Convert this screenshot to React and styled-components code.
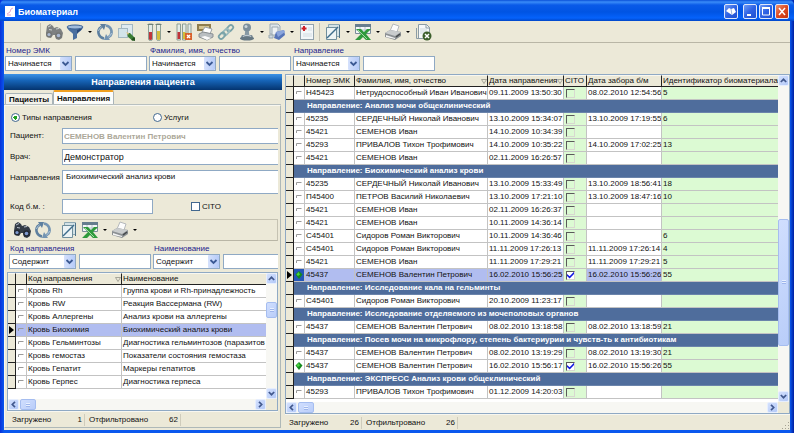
import React, { useState } from 'react';
import styled, { createGlobalStyle, css } from 'styled-components';

const face = '#ece9d8';
const edge = '#8fa9c4';
const line = '#c3c3c3';

const GlobalStyle = createGlobalStyle`
  body {
    margin: 0;
    background: #0a3fd0;
  }

  *, *::before, *::after {
    box-sizing: border-box;
  }

  body, button, input, select, textarea, table {
    font-family: 'Liberation Sans', Arial, sans-serif;
    font-size: 8px;
    line-height: 12px;
    color: #111;
  }

  button, input, select, textarea {
    margin: 0;
    padding: 0;
    border-radius: 0;
  }
`;

const Window = styled.div`
  display: flex;
  flex-direction: column;
  min-height: 100vh;
  padding: 0 4px 3px;
  background: linear-gradient(to right, #0831d9, #0a58ee 4px, #0a58ee calc(100% - 4px), #001ea0);
`;

const TitleBar = styled.header`
  display: flex;
  align-items: center;
  height: 21px;
  margin: 0 -4px;
  padding: 2px 5px 0;
  border-radius: 5px 5px 0 0;
  background: linear-gradient(#0a50d8, #3a8cf8 2px, #0a5ae8 5px, #0054e3 12px, #0562fb 18px, #0046c8);
`;

const AppTitle = styled.h1`
  flex: 1;
  margin: 0 0 0 3px;
  font: bold 9px/12px 'Liberation Sans', Arial, sans-serif;
  color: #fff;
`;

const CaptionButton = styled.button`
  width: 14px;
  height: 15px;
  margin-left: ${props => (props.$apart ? '5px' : '2px')};
  border: 1px solid #dfe8fb;
  border-radius: 2px;
  background: ${props => (props.$close
    ? 'linear-gradient(135deg, #f0936f, #dc4a22 50%, #c4350f)'
    : 'linear-gradient(135deg, #6f9cf5, #2e62e4 50%, #2150cf)')};

  svg {
    display: block;
    width: 100%;
    height: 100%;
  }
`;

const Client = styled.main`
  flex: 1;
  display: flex;
  flex-direction: column;
  background: ${face};
`;

const Toolbar = styled.div`
  display: flex;
  align-items: center;
  height: 22px;
  padding-left: ${props => (props.$inner ? '4px' : '34px')};
  border-bottom: 1px solid #b9b6a6;
  ${props => props.$inner && css`
    border-top: 1px solid #c5c2b2;
    border-right: 1px solid #c5c2b2;
  `}
`;

const ToolButton = styled.button`
  display: flex;
  align-items: center;
  justify-content: center;
  width: 21px;
  height: 20px;
  border: 0;
  background: none;

  svg {
    width: 18px;
    height: 18px;
  }

  &:disabled svg {
    opacity: 0.6;
  }
`;

const DropButton = styled.button`
  display: flex;
  align-items: center;
  justify-content: center;
  width: 9px;
  height: 20px;
  border: 0;
  background: none;

  &::after {
    content: '';
    border: 2px solid transparent;
    border-top-color: #000;
    border-bottom: 0;
  }
`;

const Separator = styled.span`
  width: 1px;
  height: 18px;
  margin: 0 ${props => (props.$wide ? '3px' : '2px')};
  background: ${props => (props.$blank ? 'transparent' : '#c5c2b2')};
`;

const Filters = styled.div`
  display: flex;
  padding: ${props => (props.$inner ? '2px 0 3px 2px' : '2px 0 3px 1px')};
`;

const FilterBox = styled.div`
  display: flex;
  flex-direction: column;
  flex: 0 0 144px;
  min-width: 0;

  &:last-child {
    flex: ${props => (props.$inner ? '1 1 0' : '0 0 144px')};
  }
`;

const FilterLabel = styled.label`
  padding-left: 1px;
  color: #1c1c8c;
  line-height: 11px;
`;

const FilterFields = styled.div`
  display: flex;
  gap: 3px;
  padding-right: ${props => (props.$open ? '0' : '2px')};
`;

const SelectBox = styled.span`
  position: relative;
  flex: 0 0 67px;

  svg {
    position: absolute;
    top: 1px;
    right: 1px;
    width: 11px;
    height: 13px;
    background: linear-gradient(to right, #d5e1fc, #b6cbf8);
    border-radius: 1px;
    pointer-events: none;
  }
`;

const Select = styled.select`
  display: block;
  appearance: none;
  width: 100%;
  height: 15px;
  padding-left: 2px;
  border: 1px solid ${edge};
  background: #fff;
`;

const TextInput = styled.input`
  flex: ${props => (props.$short ? '0 0 91px' : '1')};
  min-width: 0;
  height: ${props => (props.$tall ? '16px' : '15px')};
  padding: 0 1px;
  border: 1px solid ${edge};
  ${props => props.$open && 'border-right: 0;'}
  background: #fff;
  font-size: ${props => (props.$big ? '9px' : '8px')};

  &:disabled {
    font-weight: bold;
    color: #aca899;
  }
`;

const Panels = styled.div`
  flex: 1;
  display: grid;
  grid-template-columns: 278px minmax(0, 1fr);
  gap: 3px;
`;

const Side = styled.section`
  display: flex;
  flex-direction: column;
  min-width: 0;
`;

const PanelTitle = styled.h2`
  margin: 0;
  height: 16px;
  background: linear-gradient(#3c93e6, #1765b8 40%, #04346f);
  color: #fff;
  text-align: center;
  font: bold 9px/16px 'Liberation Sans', Arial, sans-serif;
`;

const Tabs = styled.div`
  display: flex;
  align-items: flex-end;
  height: 15px;
  padding-left: 1px;
`;

const Tab = styled.button`
  height: ${props => (props.$active ? '15px' : '12px')};
  padding: 0 3px;
  border: 1px solid #a9b4b8;
  border-top: ${props => (props.$active ? '2px solid #f0a020' : '1px solid #a9b4b8')};
  border-bottom: 0;
  border-radius: 2px 2px 0 0;
  background: ${props => (props.$active ? '#fdfdfb' : '#f3f2ea')};
  font-weight: bold;
  line-height: 11px;
`;

const Pane = styled.div`
  flex: 1;
  display: flex;
  flex-direction: column;
  margin: 0 1px 2px 0;
  padding: 2px 2px 0;
  border: 1px solid #f8f7f0;
  border-right-color: #aeb8b8;
  border-bottom-color: #aeb8b8;
  box-shadow: 0 -1px #b8c0c0;
`;

const Choices = styled.div`
  display: grid;
  grid-template-columns: 142px 1fr;
  align-items: center;
  height: 19px;
  padding-left: 4px;
`;

const CheckLabel = styled.label`
  display: flex;
  align-items: center;
  gap: 2px;
`;

const Radio = styled.input`
  appearance: none;
  width: 9px;
  height: 9px;
  border: 1px solid #42688f;
  border-radius: 50%;
  background: #fff;

  &:checked {
    background: radial-gradient(#21a121 0 2px, #fff 2px);
  }
`;

const Check = styled.input`
  display: block;
  appearance: none;
  width: 9px;
  height: 9px;
  border: 1px solid #42688f;
  background: #fff;
  ${props => props.$sunken && css`
    margin-left: 1px;
    border-color: #5a5a5a #d8d8d0 #d8d8d0 #5a5a5a;
    background: ${props.checked ? '#fff' : 'transparent'};
  `}

  &:checked::before {
    content: '';
    display: block;
    width: 7px;
    height: 7px;
    background: #1018e0;
    clip-path: polygon(0 35%, 38% 68%, 100% 5%, 100% 36%, 38% 100%, 0 66%);
  }
`;

const Form = styled.div`
  display: flex;
  flex-direction: column;
  gap: 5px;
  padding: 1px 0 5px 3px;
`;

const Field = styled.div`
  display: flex;
  align-items: ${props => (props.$top ? 'flex-start' : 'center')};
`;

const FieldLabel = styled.label`
  flex: 0 0 52px;
  padding-top: ${props => (props.$top ? '2px' : '0')};
`;

const Memo = styled.textarea`
  flex: 1;
  display: block;
  min-width: 0;
  height: 24px;
  padding: 0 3px;
  border: 1px solid ${edge};
  border-right: 0;
  resize: none;
  overflow: hidden;
`;

const CitoLabel = styled(CheckLabel)`
  margin-left: 38px;
`;

const GridFrame = styled.div`
  flex: 1;
  display: grid;
  grid-template-columns: minmax(0, 1fr) 11px;
  grid-template-rows: 1fr 11px;
  border: 1px solid ${edge};
  background: #fff;
`;

const Table = styled.table`
  width: 100%;
  table-layout: fixed;
  border-collapse: separate;
  border-spacing: 0;
  align-self: start;
`;

const HeadCell = styled.th`
  height: 12px;
  padding: 0 0 0 1px;
  overflow: hidden;
  background: ${face};
  border-right: 1px solid #222;
  border-bottom: 1px solid #222;
  border-top: 1px solid #f8f7f0;
  font-weight: normal;
  line-height: 10px;
  text-align: left;
  white-space: nowrap;

  &:last-child {
    border-right: 0;
  }
`;

const HeadText = styled.span`
  display: flex;
  align-items: center;
  justify-content: space-between;

  svg {
    flex: none;
    width: 6px;
    height: 5px;
  }
`;

const Row = styled.tr`
  background: ${props => (props.$current ? '#b1bdf0' : '#fff')};
`;

const Cell = styled.td`
  height: 13px;
  padding: 0 0 0 1px;
  overflow: hidden;
  border-right: 1px solid ${line};
  border-bottom: 1px solid ${line};
  ${props => props.$green && 'background: #dcfad3;'}
  white-space: nowrap;

  &:last-child {
    border-right: 0;
  }
`;

const MarkCell = styled(Cell)`
  padding: 0;
  ${props => props.$current && 'background: #2456b8;'}

  svg {
    display: block;
    width: 8px;
    height: 8px;
    margin: 0 auto;
  }
`;

const Indicator = styled.td`
  height: 13px;
  padding: 0;
  background: ${face};
  border-right: 1px solid #222;
  border-bottom: 1px solid #222;

  svg {
    display: block;
    width: 5px;
    height: 8px;
    margin: 0 auto;
  }
`;

const GroupCell = styled.td`
  height: 13px;
  padding: 0 0 0 13px;
  overflow: hidden;
  background: #4f6d9c;
  border-bottom: 1px solid #6b84ab;
  color: #fff;
  font-weight: bold;
  white-space: nowrap;
`;

const Bar = styled.div`
  display: flex;
  flex-direction: ${props => (props.$vertical ? 'column' : 'row')};
  min-width: 0;
  background: #f7f7f3;
`;

const BarButton = styled.button`
  flex: 0 0 11px;
  display: flex;
  align-items: center;
  justify-content: center;
  min-height: 11px;
  border: 1px solid #e6eefe;
  border-radius: 2px;
  background: linear-gradient(135deg, #d3e0fd, #b3c9f8);

  svg {
    width: 7px;
    height: 7px;
    transform: rotate(${props => props.$turn}deg);
  }
`;

const Track = styled.div`
  flex: 1;
  display: flex;
  flex-direction: inherit;
`;

const Thumb = styled.div`
  display: flex;
  align-items: center;
  justify-content: center;
  border: 1px solid #a5bdf0;
  border-radius: 2px;
  background: linear-gradient(135deg, #d0defe, #b9cdf9);

  &::after {
    content: '';
    width: 4px;
    height: 4px;
    background: repeating-linear-gradient(#e8f0ff 0 1px, #9fb6ec 1px 2px);
  }
`;

const Corner = styled.div`
  background: ${face};
`;

const Status = styled.footer`
  display: flex;
  align-items: center;
  height: 16px;
  padding-left: ${props => (props.$inner ? '1px' : '0')};
  border-top: 1px solid #f8f7f0;
`;

const StatusItem = styled.span`
  display: flex;
  justify-content: space-between;
  width: ${props => (props.$wide ? '96px' : '77px')};
  padding: 0 2px 0 4px;
  border-right: 1px solid #cfccbc;
`;

const Grip = styled.svg`
  width: 9px;
  height: 9px;
  margin-left: auto;
  align-self: flex-end;
`;

const paths = {
  binoculars: (
    <>
      <path d="M2 3 5 1l3 2 1 2 3-1 4 2 2 4-1 5-3 2-3-1-1-4-2 0-2 3-4-1-1-4z" fill="#343c48" />
      <circle cx="4" cy="11.500" r="3" fill="#252b35" />
      <circle cx="13.500" cy="12.500" r="3.300" fill="#252b35" />
      <circle cx="4" cy="11.500" r="1.600" fill="#7f9ad0" />
      <circle cx="13.500" cy="12.500" r="1.800" fill="#7f9ad0" />
      <path d="m3 4 3-1.500M11 6l3-.5M4 6.500l3 .5" stroke="#b9c1cc" />
    </>
  ),
  funnel: (
    <>
      <path d="M1 4c0 3 5 5 6 7v6l4-2v-4c1-2 6-4 6-7z" fill="#4a6f9f" />
      <path d="M11 11c1-2 5-4 5-6l-5 2z" fill="#29497a" />
      <ellipse cx="9" cy="4" rx="8" ry="2" fill="#9fbadb" stroke="#395f92" />
    </>
  ),
  refresh: (
    <>
      <path d="M8 15.500A6.500 6.500 0 0 1 3.500 5.500L6 3.500" fill="none" stroke="#5d7f9f" strokeWidth="2.600" />
      <path d="M4 1h6L8 7z" fill="#5d7f9f" />
      <path d="M10 2.500A6.500 6.500 0 0 1 14.500 12.500L12 14.500" fill="none" stroke="#7394b2" strokeWidth="2.600" />
      <path d="M14 17H8l2-6z" fill="#7394b2" />
      <path d="M2.500 8a6 6 0 0 1 3-4M15.500 10a6 6 0 0 1-3 4" fill="none" stroke="#b6cbdc" />
    </>
  ),
  pages: (
    <>
      <rect x="4.500" y="1.500" width="11" height="12" fill="#dfeaf0" stroke="#a3b8c2" />
      <rect x="1.500" y="5.500" width="9" height="9" fill="#d3e4ea" stroke="#a3b8c2" />
      <path d="m10 10 3 0 5 5-2 3-5-4z" fill="#3b7d35" />
      <path d="m9 9 3 1-1 2z" fill="#e8c88b" />
      <path d="m14 17 3-3 1 1v3z" fill="#23501f" />
    </>
  ),
  tubes: (
    <>
      <path d="M3.500 1h4v15a2 1.500 0 0 1-4 0z" fill="#e3ebe8" stroke="#8c9e95" />
      <path d="M4 9h3v7a1.500 1 0 0 1-3 0z" fill="#c0343a" />
      <path d="M11.500 1h4v15a2 1.500 0 0 1-4 0z" fill="#e6ece4" stroke="#8c9e95" />
      <path d="M12 8h3v8a1.500 1 0 0 1-3 0z" fill="#d3bd3a" />
      <path d="M2.500 1.500h6M10.500 1.500h6" stroke="#6e8178" />
    </>
  ),
  tubesOff: (
    <>
      <path d="M2 1h3.500v16H2zM7.500 1H11v16H7.500zM13 1h3v10h-3z" fill="#e3ebe8" stroke="#8c9e95" />
      <path d="M2.500 9h2.500v7H2.500z" fill="#c0343a" />
      <path d="M8 9h2.500v7H8z" fill="#d3bd3a" />
      <rect x="10" y="10" width="7" height="7" fill="#d8622c" />
      <path d="m12 12 3 3m0-3-3 3" stroke="#fff" strokeWidth="1.400" />
    </>
  ),
  labels: (
    <>
      <path d="M1 1h14v7H1z" fill="#8f7d4c" />
      <path d="M3 3h10v3H3z" fill="#d5c591" />
      <path d="m6 9 3-5 7 2-2 5z" fill="#fff" stroke="#9aa0a4" />
      <path d="m3 11 4-2 10 2v3l-6 3-8-3z" fill="#b9bec1" stroke="#8a9094" />
      <path d="m5 14 6 3 4-2-6-2z" fill="#fbfbfb" />
    </>
  ),
  link: (
    <g fill="none" strokeWidth="1.800">
      <rect x="9.500" y="3" width="7" height="4.500" rx="2.200" transform="rotate(-45 13 5.200)" stroke="#7aa3a8" />
      <rect x="5.500" y="6.800" width="7" height="4.500" rx="2.200" transform="rotate(-45 9 9)" stroke="#98babd" />
      <rect x="1.500" y="10.500" width="7" height="4.500" rx="2.200" transform="rotate(-45 5 12.800)" stroke="#7aa3a8" />
    </g>
  ),
  stamp: (
    <>
      <path d="M4 12h10l2 4H2z" fill="#7c8d97" />
      <ellipse cx="9" cy="15.500" rx="7" ry="2" fill="#667883" />
      <path d="M7.500 6h3l1 7h-5z" fill="#8799a4" />
      <circle cx="9" cy="4.500" r="4" fill="#7c8f9b" />
      <circle cx="8" cy="3.500" r="1.500" fill="#cbd6dd" />
      <path d="M5 13.500c2-1.500 6-1.500 8 0" fill="none" stroke="#c3ced5" />
    </>
  ),
  eraser: (
    <>
      <path d="M2 1h8l2 2v8H2z" fill="#dde5ea" stroke="#9aa9b2" />
      <path d="M4 4h6v8H4z" fill="#eef2f4" stroke="#9aa9b2" />
      <path d="m8 9 8-2 1 5-6 5-5-2z" fill="#5675b8" />
      <path d="m8 9 8-2 1 2-7 5z" fill="#8aa5dc" />
      <path d="M1 12h4v3H1z" fill="#cfd9df" stroke="#9aa9b2" />
    </>
  ),
  medical: (
    <>
      <rect x="2.500" y="1.500" width="13" height="15" fill="#f3f7f9" stroke="#93a3ad" />
      <path d="M6 3v5M3.500 5.500h5" stroke="#cf2027" strokeWidth="2" />
      <path d="M10 5h4M10 7h4M5 11h9M5 13h9" stroke="#d3dde3" />
    </>
  ),
  chart: (
    <>
      <path d="M4.500 1.500h11v12h-11z" fill="#d3e2e6" stroke="#8ea8b3" />
      <path d="M2.500 4.500h10v12h-10z" fill="#edf4f5" stroke="#6f8e9c" />
      <path d="M3 15 14 4" stroke="#3e6d8c" strokeWidth="1.400" />
      <path d="M15.500 2v13" stroke="#4d7288" />
    </>
  ),
  excel: (
    <>
      <path d="M1.500 1.500h15v9h-15z" fill="#f3f6f8" stroke="#7b8d9b" />
      <path d="M1 1h16v3H1z" fill="#667d8e" />
      <path d="M2 7h14M6 4v6M11 4v6" stroke="#b6c3cc" />
      <path d="M2 6h5l3 3 3-3h4l-5 5 5 6h-5l-3-3-3 3H1l6-6z" fill="#2f9a3c" />
      <path d="m4 7 9 9" stroke="#a3d9a5" />
    </>
  ),
  printer: (
    <>
      <path d="m6 8 3-7 6 2-2 6z" fill="#fcfcfc" stroke="#b5b9bc" />
      <path d="m1 10 5-3 11 2v4l-6 4-10-3z" fill="#8b9093" />
      <path d="m1 10 5-3 11 2-6 4z" fill="#c9cccd" />
      <path d="m2 12 9 3v1l-9-2z" fill="#f4f4f4" />
      <path d="m12 14 4-3" stroke="#44484b" strokeWidth="1.500" />
    </>
  ),
  removeDoc: (
    <>
      <path d="M4.500 1.500h8l3 3v11h-11z" fill="#f5f8f9" stroke="#8b9ca5" />
      <path d="M12 1v4h4M2.500 5v10.500h6" fill="none" stroke="#8b9ca5" />
      <path d="M6 6h7M6 8h7M6 10h4" stroke="#cfdade" />
      <circle cx="13" cy="13" r="4.500" fill="#3c5f2c" />
      <path d="m11 11 4 4m0-4-4 4" stroke="#fff" strokeWidth="1.500" />
    </>
  ),
};

const Icon = ({ name }) => <svg viewBox="0 0 18 18" aria-hidden="true">{paths[name]}</svg>;

const Chevron = () => (
  <svg viewBox="0 0 11 13" aria-hidden="true">
    <path d="M2.500 5 5.500 8l3-3" fill="none" stroke="#3c5a94" strokeWidth="1.800" />
  </svg>
);

const Arrow = () => (
  <svg viewBox="0 0 7 7" aria-hidden="true">
    <path d="m.8 5 2.700-2.700L6.200 5" fill="none" stroke="#42598e" strokeWidth="1.700" />
  </svg>
);

const SortMark = () => (
  <svg viewBox="0 0 6 5" aria-hidden="true">
    <path d="M.5.5h5L3 4.500z" fill="none" stroke="#96948a" strokeWidth=".8" />
  </svg>
);

function Tool({ icon, title, drop, disabled }) {
  return (
    <>
      <ToolButton type="button" title={title} disabled={disabled}><Icon name={icon} /></ToolButton>
      {drop && <DropButton type="button" aria-label={`${title}: меню`} />}
    </>
  );
}

function Filter({ id, label, mode, inner, open }) {
  return (
    <FilterBox $inner={inner}>
      <FilterLabel htmlFor={id}>{label}</FilterLabel>
      <FilterFields $open={open}>
        <SelectBox>
          <Select aria-label={`${label}: условие`} defaultValue={mode}>
            <option>Начинается</option>
            <option>Содержит</option>
          </Select>
          <Chevron />
        </SelectBox>
        <TextInput id={id} $open={open} />
      </FilterFields>
    </FilterBox>
  );
}

function ScrollBar({ vertical, before, size, after }) {
  return (
    <Bar $vertical={vertical}>
      <BarButton type="button" aria-label="Назад" $turn={vertical ? 0 : -90}><Arrow /></BarButton>
      <Track>
        <div style={{ flexGrow: before }} />
        <Thumb style={{ flexGrow: size }} />
        <div style={{ flexGrow: after }} />
      </Track>
      <BarButton type="button" aria-label="Вперёд" $turn={vertical ? 180 : 90}><Arrow /></BarButton>
    </Bar>
  );
}

function RowMark({ kind }) {
  if (kind) {
    return (
      <svg viewBox="0 0 8 8" aria-hidden="true">
        <path d="M4 0 7.500 3.500 4 8 .5 3.500z" fill="#158a1c" />
        <path d="M3.500 1 5 3.500 3 5 1.500 3.500z" fill="#4bd33f" />
      </svg>
    );
  }
  return (
    <svg viewBox="0 0 8 8" aria-hidden="true">
      <path d="M1.500 5V2.500h5" fill="none" stroke="#9a9a9a" />
    </svg>
  );
}

const CurrentMark = () => (
  <svg viewBox="0 0 5 8" aria-hidden="true"><path d="M0 0 5 4 0 8z" fill="#000" /></svg>
);

const directions = [
  ['Кровь Rh', 'Группа крови и Rh-принадлежность'],
  ['Кровь RW', 'Реакция Вассермана (RW)'],
  ['Кровь Аллергены', 'Анализ крови на аллергены'],
  ['Кровь Биохимия', 'Биохимический анализ крови'],
  ['Кровь Гельминтозы', 'Диагностика гельминтозов (паразитов'],
  ['Кровь гемостаз', 'Показатели состояния гемостаза'],
  ['Кровь Гепатит', 'Маркеры гепатитов'],
  ['Кровь Герпес', 'Диагностика герпеса'],
];

const samples = [
  { no: 'Н45423', name: 'Нетрудоспособный Иван Иванович', date: '09.11.2009 13:50:30', taken: '08.02.2010 12:54:56', id: '5' },
  { group: 'Анализ мочи общеклинический' },
  { no: '45235', name: 'СЕРДЕЧНЫЙ Николай Иванович', date: '13.10.2009 15:34:07', taken: '13.10.2009 17:19:55', id: '6' },
  { no: '45421', name: 'СЕМЕНОВ Иван', date: '14.10.2009 10:34:39' },
  { no: '45293', name: 'ПРИВАЛОВ Тихон Трофимович', date: '14.10.2009 10:35:22', taken: '14.10.2009 17:02:25', id: '13' },
  { no: '45421', name: 'СЕМЕНОВ Иван', date: '02.11.2009 16:26:57' },
  { group: 'Биохимический анализ крови' },
  { no: '45235', name: 'СЕРДЕЧНЫЙ Николай Иванович', date: '13.10.2009 15:33:49', taken: '13.10.2009 18:56:41', id: '18' },
  { no: 'П45400', name: 'ПЕТРОВ Василий Николаевич', date: '13.10.2009 17:21:10', taken: '13.10.2009 18:47:16', id: '10' },
  { no: '45421', name: 'СЕМЕНОВ Иван', date: '02.11.2009 16:26:37' },
  { no: '45421', name: 'СЕМЕНОВ Иван', date: '10.11.2009 14:36:14' },
  { no: 'С45401', name: 'Сидоров Роман Викторович', date: '10.11.2009 14:36:46', id: '6' },
  { no: 'С45401', name: 'Сидоров Роман Викторович', date: '11.11.2009 17:26:13', taken: '11.11.2009 17:26:14', id: '4' },
  { no: '45421', name: 'СЕМЕНОВ Иван', date: '11.11.2009 17:29:21', taken: '11.11.2009 17:29:21', id: '5' },
  { no: '45437', name: 'СЕМЕНОВ Валентин Петрович', date: '16.02.2010 15:56:25', taken: '16.02.2010 15:56:26', id: '55', cito: true, current: true },
  { group: 'Исследование кала на гельминты' },
  { no: 'С45401', name: 'Сидоров Роман Викторович', date: '20.10.2009 11:23:17' },
  { group: 'Исследование отделяемого из мочеполовых органов' },
  { no: '45437', name: 'СЕМЕНОВ Валентин Петрович', date: '08.02.2010 13:18:58', taken: '08.02.2010 13:18:59', id: '21' },
  { group: 'Посев мочи на микрофлору, степень бактериурии и чувств-ть к антибиотикам' },
  { no: '45437', name: 'СЕМЕНОВ Валентин Петрович', date: '08.02.2010 13:19:29', taken: '08.02.2010 13:19:30', id: '21' },
  { no: '45437', name: 'СЕМЕНОВ Валентин Петрович', date: '16.02.2010 15:56:17', taken: '16.02.2010 15:56:26', id: '55', cito: true },
  { group: 'ЭКСПРЕСС Анализ крови общеклинический' },
  { no: '45293', name: 'ПРИВАЛОВ Тихон Трофимович', date: '01.12.2009 14:20:03' },
];

const Columns = ({ widths }) => (
  <colgroup>
    {widths.map((w, i) => <col key={i} style={{ width: w }} />)}
  </colgroup>
);

function DirectionsGrid() {
  return (
    <GridFrame>
      <Table>
        <Columns widths={[8, 11, 95, null]} />
        <thead>
          <tr>
            <HeadCell />
            <HeadCell />
            <HeadCell><HeadText>Код направления<SortMark /></HeadText></HeadCell>
            <HeadCell>Наименование</HeadCell>
          </tr>
        </thead>
        <tbody>
          {directions.map(([code, name], i) => (
            <Row key={code} $current={i === 3}>
              <Indicator>{i === 3 && <CurrentMark />}</Indicator>
              <MarkCell><RowMark /></MarkCell>
              <Cell>{code}</Cell>
              <Cell>{name}</Cell>
            </Row>
          ))}
        </tbody>
      </Table>
      <ScrollBar vertical before={19} size={11} after={76} />
      <ScrollBar before={1} size={10} after={226} />
      <Corner />
    </GridFrame>
  );
}

function SamplesGrid() {
  return (
    <GridFrame>
      <Table>
        <Columns widths={[8, 11, 50, 133, 76, 23, 75, null]} />
        <thead>
          <tr>
            <HeadCell />
            <HeadCell />
            <HeadCell>Номер ЭМК</HeadCell>
            <HeadCell><HeadText>Фамилия, имя, отчество<SortMark /></HeadText></HeadCell>
            <HeadCell><HeadText>Дата направления<SortMark /></HeadText></HeadCell>
            <HeadCell>CITO</HeadCell>
            <HeadCell>Дата забора б/м</HeadCell>
            <HeadCell>Идентификатор биоматериала</HeadCell>
          </tr>
        </thead>
        <tbody>
          {samples.map((s, i) => (s.group ? (
            <tr key={i}>
              <Indicator />
              <GroupCell colSpan={7}>Направление: {s.group}</GroupCell>
            </tr>
          ) : (
            <Row key={i} $current={s.current}>
              <Indicator>{s.current && <CurrentMark />}</Indicator>
              <MarkCell $current={s.current}><RowMark kind={s.cito} /></MarkCell>
              <Cell>{s.no}</Cell>
              <Cell>{s.name}</Cell>
              <Cell>{s.date}</Cell>
              <Cell $green><Check type="checkbox" aria-label="CITO" $sunken checked={!!s.cito} readOnly /></Cell>
              <Cell>{s.taken}</Cell>
              <Cell $green>{s.id}</Cell>
            </Row>
          )))}
        </tbody>
      </Table>
      <ScrollBar vertical before={135} size={123} after={46} />
      <ScrollBar before={1} size={10} after={458} />
      <Corner />
    </GridFrame>
  );
}

function App() {
  const [kind, setKind] = useState('types');
  const [cito, setCito] = useState(false);

  return (
    <>
      <GlobalStyle />
      <Window>
        <TitleBar>
          <svg width="10" height="11" viewBox="0 0 10 11" aria-hidden="true">
            <rect width="10" height="11" fill="#fff" />
            <path d="m2 8 3-2 1-3 2-1M2 9h4" fill="none" stroke="#e2a9cf" />
          </svg>
          <AppTitle>Биоматериал</AppTitle>
          <CaptionButton type="button" aria-label="Справка">
            <svg viewBox="0 0 12 13"><path d="m1 6 3-3 2 1 3-1 2 4-4 3z" fill="#fff" /><path d="m6 4 1 6" stroke="#9fb4d8" /></svg>
          </CaptionButton>
          <CaptionButton type="button" aria-label="Свернуть" $apart>
            <svg viewBox="0 0 12 13"><path d="M3 9h4v2H3z" fill="#fff" /></svg>
          </CaptionButton>
          <CaptionButton type="button" aria-label="Развернуть">
            <svg viewBox="0 0 12 13"><path d="M2.500 3h7v7h-7z" fill="none" stroke="#fff" /><path d="M2 3h8" stroke="#fff" strokeWidth="2" /></svg>
          </CaptionButton>
          <CaptionButton type="button" aria-label="Закрыть" $close>
            <svg viewBox="0 0 12 13"><path d="m3 3 6 7m0-7-6 7" stroke="#fff" strokeWidth="1.500" /></svg>
          </CaptionButton>
        </TitleBar>
        <Client>
          <Toolbar>
            <Separator />
            <Tool icon="binoculars" title="Найти" disabled />
            <Tool icon="funnel" title="Фильтр" drop />
            <Tool icon="refresh" title="Обновить" />
            <Tool icon="pages" title="Изменить" />
            <Separator $wide $blank />
            <Tool icon="tubes" title="Забор биоматериала" drop />
            <Tool icon="tubesOff" title="Отменить забор" />
            <Tool icon="labels" title="Печать этикеток" />
            <Tool icon="link" title="Связать" />
            <Tool icon="stamp" title="Штамп" drop />
            <Tool icon="eraser" title="Очистить" drop />
            <Tool icon="medical" title="Карта" />
            <Separator />
            <Tool icon="chart" title="График" drop />
            <Tool icon="excel" title="Экспорт" drop />
            <Tool icon="printer" title="Печать" drop />
            <Tool icon="removeDoc" title="Удалить" />
          </Toolbar>
          <Filters>
            <Filter id="emk" label="Номер ЭМК" mode="Начинается" />
            <Filter id="fio" label="Фамилия, имя, отчество" mode="Начинается" />
            <Filter id="direction" label="Направление" mode="Начинается" />
          </Filters>
          <Panels>
            <Side>
              <PanelTitle>Направления пациента</PanelTitle>
              <Tabs role="tablist">
                <Tab type="button" role="tab" aria-selected="false">Пациенты</Tab>
                <Tab type="button" role="tab" aria-selected="true" $active>Направления</Tab>
              </Tabs>
              <Pane>
                <Choices>
                  <CheckLabel>
                    <Radio type="radio" name="kind" checked={kind === 'types'} onChange={() => setKind('types')} />
                    Типы направления
                  </CheckLabel>
                  <CheckLabel>
                    <Radio type="radio" name="kind" checked={kind === 'services'} onChange={() => setKind('services')} />
                    Услуги
                  </CheckLabel>
                </Choices>
                <Form>
                  <Field>
                    <FieldLabel htmlFor="patient">Пациент:</FieldLabel>
                    <TextInput id="patient" $tall $open disabled defaultValue="СЕМЕНОВ Валентин Петрович" />
                  </Field>
                  <Field>
                    <FieldLabel htmlFor="doctor">Врач:</FieldLabel>
                    <TextInput id="doctor" $tall $open $big defaultValue="Демонстратор" />
                  </Field>
                  <Field $top>
                    <FieldLabel htmlFor="list" $top>Направления</FieldLabel>
                    <Memo id="list" defaultValue="Биохимический анализ крови" />
                  </Field>
                  <Field>
                    <FieldLabel htmlFor="code">Код б.м. :</FieldLabel>
                    <TextInput id="code" $short />
                    <CitoLabel>
                      <Check type="checkbox" checked={cito} onChange={() => setCito(!cito)} />
                      CITO
                    </CitoLabel>
                  </Field>
                </Form>
                <Toolbar $inner>
                  <Tool icon="binoculars" title="Найти" />
                  <Tool icon="refresh" title="Обновить" />
                  <Separator $blank />
                  <Tool icon="chart" title="График" />
                  <Tool icon="excel" title="Экспорт" drop />
                  <Tool icon="printer" title="Печать" drop />
                </Toolbar>
                <Filters $inner>
                  <Filter id="kod" label="Код направления" mode="Содержит" inner />
                  <Filter id="title" label="Наименование" mode="Содержит" inner open />
                </Filters>
                <DirectionsGrid />
                <Status $inner>
                  <StatusItem><span>Загружено</span><span>1</span></StatusItem>
                  <StatusItem $wide><span>Отфильтровано</span><span>62</span></StatusItem>
                </Status>
              </Pane>
            </Side>
            <Side>
              <SamplesGrid />
              <Status>
                <StatusItem><span>Загружено</span><span>26</span></StatusItem>
                <StatusItem $wide><span>Отфильтровано</span><span>26</span></StatusItem>
                <Grip viewBox="0 0 9 9" aria-hidden="true">
                  <path d="M7 1h1v1H7zM4 4h1v1H4zM7 4h1v1H7zM1 7h1v1H1zM4 7h1v1H4zM7 7h1v1H7z" fill="#a5a293" />
                </Grip>
              </Status>
            </Side>
          </Panels>
        </Client>
      </Window>
    </>
  );
}

export default App;
